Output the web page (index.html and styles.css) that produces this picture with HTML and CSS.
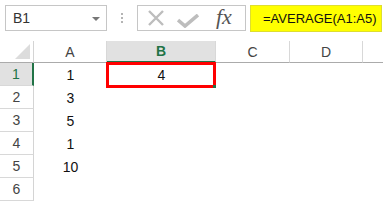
FILE: index.html
```html
<!DOCTYPE html>
<html lang="en">
<head>
  <meta charset="UTF-8">
  <title>Average</title>
  <link rel="stylesheet" href="styles.css">
</head>
<body>

<!-- barra de formulas -->
<div class="barra">
    <div class="nombre">
        <span>B1</span>
        <span class="flecha"></span>
    </div>
    <div class="puntos"><i></i><i></i><i></i></div>
    <div class="botones">
        <svg width="18" height="16" viewBox="0 0 18 16">
            <path d="M2 1 L16 15 M16 1 L2 15" stroke="#bdbdbd" stroke-width="2.4" fill="none"/>
        </svg>
        <svg width="22" height="14" viewBox="0 0 22 14">
            <path d="M1 6 L8 12 L21 1" stroke="#bdbdbd" stroke-width="3.6" fill="none"/>
        </svg>
        <span class="fx">fx</span>
    </div>
    <div class="formula">=AVERAGE(A1:A5)</div>
</div>

<!-- hoja -->
<div class="hoja">
    <div class="esquina"><span class="triangulo"></span></div>
    <div class="cabecera">A</div>
    <div class="cabecera activa">B</div>
    <div class="cabecera">C</div>
    <div class="cabecera">D</div>
    <div class="cabecera ultima"></div>

    <div class="fila activa">1</div>
    <div class="celda">1</div>
    <div class="celda seleccion">4<span class="marco"><span class="tirador"></span></span></div>
    <div class="celda"></div>
    <div class="celda"></div>
    <div class="celda"></div>

    <div class="fila">2</div>
    <div class="celda">3</div>
    <div class="celda"></div>
    <div class="celda"></div>
    <div class="celda"></div>
    <div class="celda"></div>

    <div class="fila">3</div>
    <div class="celda">5</div>
    <div class="celda"></div>
    <div class="celda"></div>
    <div class="celda"></div>
    <div class="celda"></div>

    <div class="fila">4</div>
    <div class="celda">1</div>
    <div class="celda"></div>
    <div class="celda"></div>
    <div class="celda"></div>
    <div class="celda"></div>

    <div class="fila">5</div>
    <div class="celda">10</div>
    <div class="celda"></div>
    <div class="celda"></div>
    <div class="celda"></div>
    <div class="celda"></div>

    <div class="fila">6</div>
    <div class="celda"></div>
    <div class="celda"></div>
    <div class="celda"></div>
    <div class="celda"></div>
    <div class="celda"></div>
</div>

</body>
</html>
```

FILE: styles.css
```css
* {
    box-sizing: border-box;
}

body {
    margin: 0;
    background: white;
    font-family: "Liberation Sans", Arial, sans-serif;
    font-size: 14px;
    color: #222;
    overflow: hidden;
}

/* barra */
.barra {
    display: flex;
    align-items: center;
    height: 41px;
    padding: 0 0 5px 5px;
}

.nombre {
    display: flex;
    align-items: center;
    justify-content: space-between;
    width: 102px;
    height: 26px;
    border: 1px solid #c6c6c6;
    padding: 0 6px 0 7px;
    color: #333;
    font-size: 14px;
}

.flecha {
    width: 0;
    height: 0;
    border-left: 4px solid transparent;
    border-right: 4px solid transparent;
    border-top: 4px solid #777;
    margin-top: 1px;
}

.puntos {
    display: flex;
    flex-direction: column;
    align-items: center;
    gap: 2px;
    width: 30px;
}

.puntos i {
    display: block;
    width: 2px;
    height: 2px;
    background: #b4b4b4;
}

.botones {
    display: flex;
    align-items: center;
    width: 109px;
    height: 26px;
    border: 1px solid #c6c6c6;
    padding-left: 9px;
    gap: 12px;
}

.botones svg:nth-child(2) {
    margin-top: 6px;
}

.fx {
    font-family: "Liberation Serif", "Times New Roman", serif;
    font-style: italic;
    font-size: 22px;
    color: #555;
    margin-left: 5px;
    margin-top: -3px;
}

.formula {
    display: flex;
    align-items: center;
    margin-left: 4px;
    width: 132px;
    height: 27px;
    background: #ffff00;
    border: 1px solid #dede30;
    padding-left: 12px;
    font-size: 13px;
    color: #111;
}

/* hoja */
.hoja {
    display: grid;
    grid-template-columns: 34px 73px 109px 74px 73px 1fr;
    grid-template-rows: 22px repeat(6, 23px);
}

.esquina {
    position: relative;
    border-right: 1px solid #d4d4d4;
    border-bottom: 1px solid #ababab;
}

.triangulo {
    position: absolute;
    right: 3px;
    bottom: 3px;
    width: 0;
    height: 0;
    border-left: 15px solid transparent;
    border-bottom: 15px solid #dcdcdc;
}

.cabecera {
    display: flex;
    align-items: center;
    justify-content: center;
    border-right: 1px solid #d8d8d8;
    border-bottom: 1px solid #ababab;
    color: #444;
    font-size: 14px;
}

.cabecera.activa {
    background: #e1e1e1;
    color: #217346;
    font-weight: bold;
    border-bottom: 2px solid #217346;
}

.cabecera.ultima {
    border-right: none;
}

.fila {
    display: flex;
    align-items: center;
    justify-content: center;
    border-right: 1px solid #d4d4d4;
    border-bottom: 1px solid #d8d8d8;
    color: #444;
    font-size: 14px;
}

.fila.activa {
    background: #e1e1e1;
    color: #217346;
    border-right: 2px solid #217346;
}

.celda {
    display: flex;
    align-items: center;
    justify-content: center;
    color: #111;
    font-size: 14px;
}

.seleccion {
    position: relative;
}

.marco {
    position: absolute;
    left: -1px;
    top: -1px;
    right: 0;
    bottom: -2px;
    border: 3px solid #ff0000;
}

.tirador {
    position: absolute;
    right: -3px;
    bottom: -3px;
    width: 3px;
    height: 3px;
    background: #217346;
}
```
